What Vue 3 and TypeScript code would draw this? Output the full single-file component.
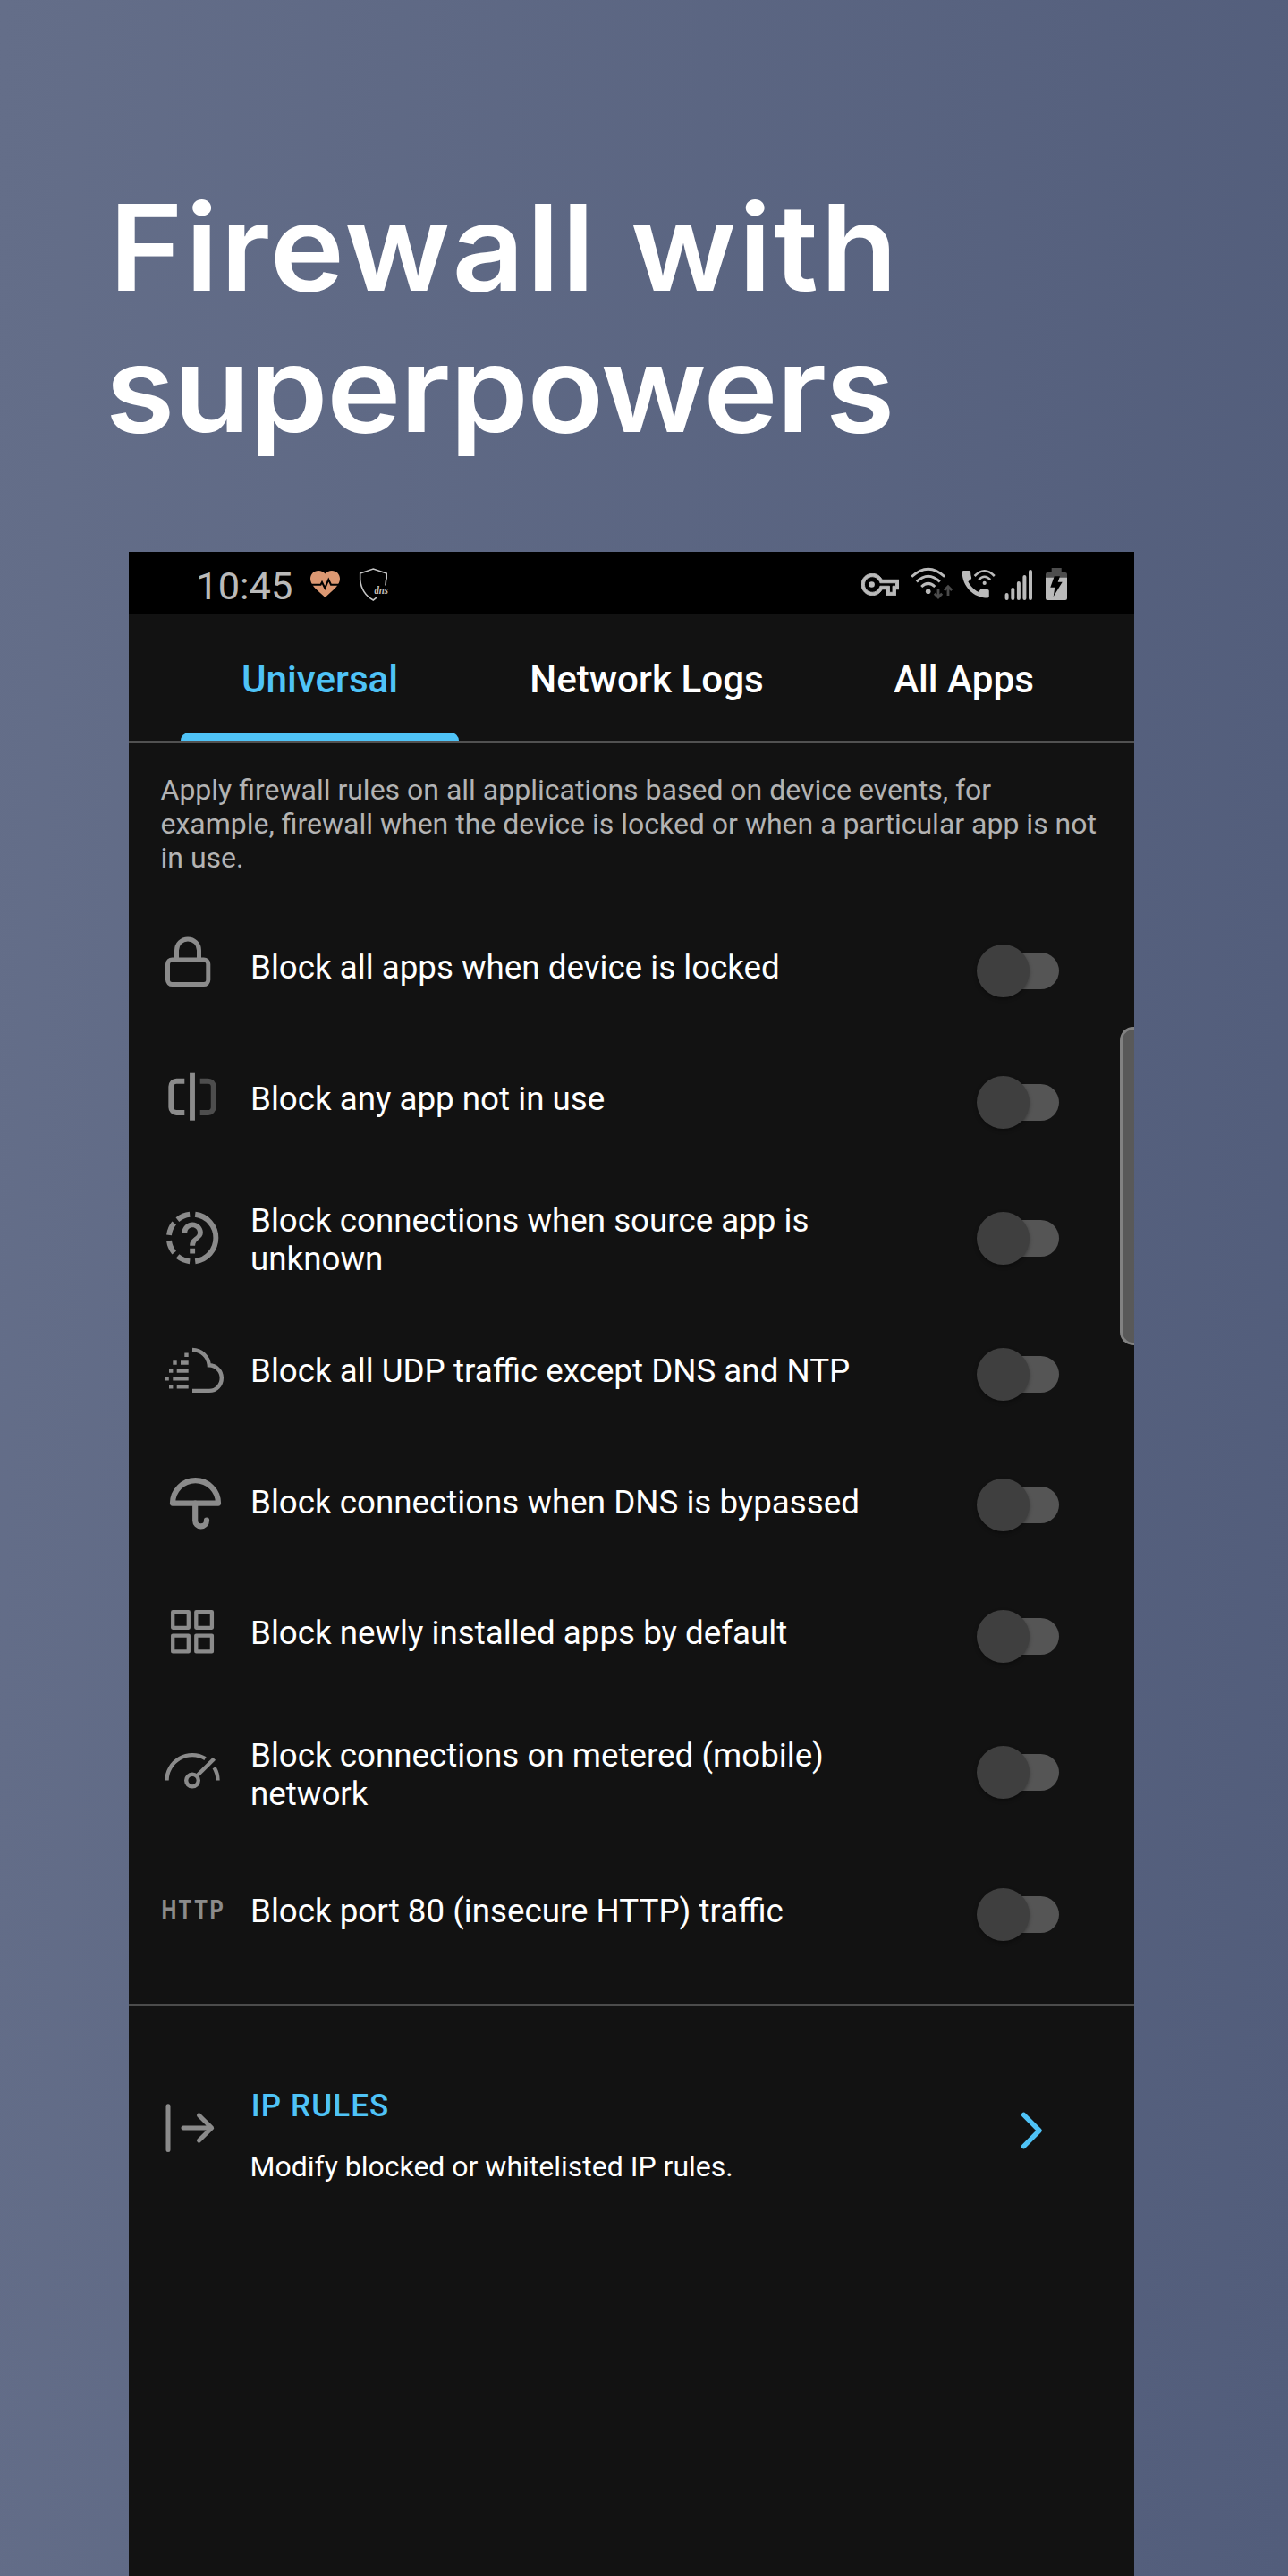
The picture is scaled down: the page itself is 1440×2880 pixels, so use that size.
<script setup lang="ts">
interface Rule {
  icon: string
  label: string
  height: number
  tall?: boolean
}

const tabs = [
  { name: 'Universal', width: 311, active: true },
  { name: 'Network Logs', width: 420, active: false },
  { name: 'All Apps', width: 289, active: false },
]

const rules: Rule[] = [
  { icon: 'lock', label: 'Block all apps when device is locked', height: 146.7 },
  { icon: 'split', label: 'Block any app not in use', height: 146.7 },
  { icon: 'unknown', label: 'Block connections when source app is\nunknown', height: 157.3, tall: true },
  { icon: 'cloud', label: 'Block all UDP traffic except DNS and NTP', height: 146.7 },
  { icon: 'umbrella', label: 'Block connections when DNS is bypassed', height: 146.7 },
  { icon: 'grid', label: 'Block newly installed apps by default', height: 147 },
  { icon: 'gauge', label: 'Block connections on metered (mobile)\nnetwork', height: 157, tall: true },
  { icon: 'http', label: 'Block port 80 (insecure HTTP) traffic', height: 160 },
]
</script>

<template>
  <main class="page">
    <h1 class="headline">
      <span class="line first">Firewall with</span>
      <span class="line second">superpowers</span>
    </h1>

    <section class="phone">
      <header class="status">
        <span class="time">10:45</span>
        <svg class="heart" width="33" height="30" viewBox="0 0 33 30">
          <path transform="translate(-3.3 -4.9) scale(1.65 1.635)" fill="#dc9872" d="M12 21.35l-1.45-1.32C5.4 15.36 2 12.28 2 8.5 2 5.42 4.42 3 7.5 3c1.74 0 3.41.81 4.5 2.09C13.09 3.81 14.76 3 16.5 3 19.58 3 22 5.42 22 8.5c0 3.78-3.4 6.86-8.55 11.54L12 21.35z" />
          <path fill="none" stroke="#000" stroke-width="2" d="M1 15.7H11.5L13 13L16.3 19.5L20.3 10L23 15.7H32" />
        </svg>
        <svg class="shield" width="40" height="39" viewBox="0 0 40 39">
          <path fill="none" stroke="#c4c4c4" stroke-width="1.6" d="M30 20.5L30.5 15L31.2 12.5V7L16.3 2L1.7 7V14C2.6 24.5 8 32.5 16.3 37L20.6 33.7" />
          <text x="17.5" y="30" font-size="13" font-style="italic" font-weight="700" textLength="15.5" lengthAdjust="spacingAndGlyphs" fill="#c4c4c4" font-family="'Liberation Serif', serif">dns</text>
        </svg>
        <span class="spacer"></span>
        <svg class="key" width="42" height="25" viewBox="0 5 24 14">
          <path fill="#bababa" stroke="#bababa" stroke-width=".5" d="M22 19h-6v-4h-2.68c-1.14 2.42-3.6 4-6.32 4-3.86 0-7-3.14-7-7s3.14-7 7-7c2.72 0 5.17 1.58 6.32 4H24v6h-2v4zm-4-2h2v-4h2v-2H11.94l-.23-.67C11.01 8.34 9.11 7 7 7c-2.76 0-5 2.24-5 5s2.24 5 5 5c2.11 0 4.01-1.34 4.71-3.33l.23-.67H18v4z" />
          <circle cx="6.6" cy="12" r="1.9" fill="#bababa" />
        </svg>
        <svg class="wifi" width="48" height="37" viewBox="0 0 48 37">
          <g fill="none" stroke="#bababa" stroke-width="2.9">
            <path d="M1.2 10.8Q19.7-6.5 38.2 10.8" />
            <path d="M6.8 16.4Q19.7 4 32.8 16.4" />
            <path d="M12.2 22Q19.7 14.8 27.3 22" />
          </g>
          <circle cx="19.7" cy="27.2" r="2.8" fill="#bababa" />
          <path fill="none" stroke="#4a4a4a" stroke-width="2.8" d="M31 24V34M26.8 29.8L31 34L35.2 29.8M42 32V22M37.8 26L42 21.8L46.2 26" />
        </svg>
        <svg class="call" width="38" height="34" viewBox="0 0 38 34">
          <path transform="translate(-4.3 -3.1) scale(1.67 1.7)" fill="#bababa" d="M20.01 15.38c-1.23 0-2.42-.2-3.53-.56-.35-.12-.74-.03-1.01.24l-1.57 1.97c-2.83-1.35-5.48-3.9-6.89-6.83l1.95-1.66c.27-.28.35-.67.24-1.02-.37-1.11-.56-2.3-.56-3.53 0-.54-.45-.99-.99-.99H4.19C3.65 3 3 3.24 3 3.99 3 13.28 10.73 21 20.01 21c.71 0 .99-.63.99-1.18v-3.45c0-.54-.45-.99-.99-.99z" />
          <path fill="none" stroke="#000" stroke-width="2" d="M13 0V9L20 13" />
          <g fill="none" stroke="#bababa" stroke-width="2.6">
            <path d="M14.6 8Q25.7-3.6 36.8 8" />
            <path d="M19.2 12.2Q25.7 5.4 32.2 12.2" />
          </g>
          <circle cx="25.7" cy="15.9" r="2.1" fill="#bababa" />
        </svg>
        <svg class="signal" width="32" height="37" viewBox="0 0 32 37">
          <path fill="none" stroke="#bababa" stroke-width="4" stroke-linecap="round" d="M2.6 29V33M9.3 23V33M15.9 16V33M22.4 9V33M29 3V33" />
        </svg>
        <svg class="battery" width="24" height="36" viewBox="0 0 24 36">
          <path fill="#4d4d4d" d="M6.7 0h11v5H22a2 2 0 0 1 2 2v4H0V7a2 2 0 0 1 2-2h4.7z" />
          <path fill="#bababa" d="M0 10.7h24V34a2 2 0 0 1-2 2H2a2 2 0 0 1-2-2z" />
          <path fill="#000" d="M9.7 9.3H16L13.7 15.7H18.7L8.7 32L10.3 21.7H5.3z" />
        </svg>
      </header>

      <nav class="tabs">
        <div v-for="tab in tabs" :key="tab.name" class="tab" :class="{ active: tab.active }" :style="{ width: tab.width + 'px' }">
          <span class="tab-name">{{ tab.name }}</span>
          <span v-if="tab.active" class="indicator"></span>
        </div>
      </nav>

      <p class="intro">Apply firewall rules on all applications based on device events, for<br />example, firewall when the device is locked or when a particular app is not<br />in use.</p>

      <div class="rules">
        <div v-for="rule in rules" :key="rule.icon" class="rule" :style="{ height: rule.height + 'px' }">
          <svg class="icon" width="80" height="80" viewBox="0 0 80 80" fill="none" stroke="#8b8b8b">
            <g v-if="rule.icon === 'lock'" stroke-width="5">
              <rect x="11.5" y="26.9" width="45.3" height="27.7" rx="5" />
              <path d="M21.5 27V16.4a12.5 12.5 0 0 1 25 0V27" />
            </g>
            <g v-else-if="rule.icon === 'split'" stroke-width="5.9">
              <path d="M30.3 16.7H21.3a6 6 0 0 0-6 6V46a6 6 0 0 0 6 6H30.3" />
              <path d="M39 7.7V60.7" />
              <path stroke="#4d4d4d" d="M47.7 16.7H56.7a6 6 0 0 1 6 6V46a6 6 0 0 1-6 6H47.7" />
            </g>
            <g v-else-if="rule.icon === 'unknown'" stroke-width="5.9">
              <path d="M42.2 13.8A26.4 26.4 0 0 1 42.2 66.2" />
              <path d="M36.2 13.8A26.4 26.4 0 0 0 22.4 19.6" />
              <path d="M18.7 23.4A26.4 26.4 0 0 0 13 36.8" />
              <path d="M13 43.2A26.4 26.4 0 0 0 18.7 56.6" />
              <path d="M22.6 60.5A26.4 26.4 0 0 0 36.2 66.2" />
              <path transform="translate(4 4.8) scale(2.93)" fill="#8b8b8b" stroke="none" d="M12 6c-2.21 0-4 1.79-4 4h2c0-1.1.9-2 2-2s2 .9 2 2c0 2-3 1.75-3 5h2c0-2.25 3-2.5 3-5 0-2.21-1.79-4-4-4zM11 16h2v2h-2z" />
            </g>
            <g v-else-if="rule.icon === 'cloud'" stroke-width="4.4">
              <path d="M39 13C49 13.3 57 20.5 57.8 30.3C65.5 30.5 71.8 36.8 71.8 44.5C71.8 52.5 65.8 58.9 58 58.9H39" />
              <path d="M30.3 18.8H34.7M17.3 27.5H21.7M26 27.5H34.7M13 36.5H17.4M21.7 36.5H34.7M8.4 45.2H12.8M17.3 45.2H34.7M13 54.2H17.4M21.7 54.2H34.7" />
            </g>
            <g v-else-if="rule.icon === 'umbrella'" stroke-width="6.2" stroke-linejoin="round" stroke-linecap="round">
              <path d="M17 37.6A25.5 25.5 0 0 1 68 37.6Z" />
              <path d="M42.2 37.6V57a6.4 6.4 0 0 0 12.8 0v-.5" />
            </g>
            <g v-else-if="rule.icon === 'grid'" stroke-width="4.3" stroke-linejoin="round">
              <rect x="17.2" y="12.2" width="17.6" height="17.6" />
              <rect x="43.3" y="12.2" width="17.6" height="17.6" />
              <rect x="17.2" y="38.6" width="17.6" height="17.8" />
              <rect x="43.3" y="38.6" width="17.6" height="17.8" />
            </g>
            <g v-else-if="rule.icon === 'gauge'" stroke-width="4.4">
              <circle cx="39" cy="48.6" r="6.8" />
              <path d="M10.5 48.6A28.5 28.5 0 0 1 53.5 24.1" />
              <path d="M63.5 34.1A28.5 28.5 0 0 1 67.5 48.6" />
              <path d="M43.8 43.8L63.5 24.3" />
            </g>
            <text v-else class="http" transform="translate(4.500 46) scale(.78 1)" textLength="89" lengthAdjust="spacing">HTTP</text>
          </svg>
          <span class="label" :class="{ tall: rule.tall }">{{ rule.label }}</span>
          <span class="toggle"><span class="track"></span><span class="thumb"></span></span>
        </div>
      </div>

      <hr class="divider" />

      <div class="ip">
        <svg class="ip-icon" width="80" height="80" viewBox="0 0 80 80" fill="none" stroke="#8b8b8b" stroke-width="5" stroke-linecap="round" stroke-linejoin="round">
          <path d="M12 15.8V64.5M29 40H60.5M46.5 26L60.7 40L46.5 54" />
        </svg>
        <div class="ip-text">
          <div class="ip-title">IP RULES</div>
          <div class="ip-sub">Modify blocked or whitelisted IP rules.</div>
        </div>
        <svg class="chevron" width="26" height="44" viewBox="0 0 26 44" fill="none" stroke="#4fc3f7" stroke-width="5.4" stroke-linecap="round" stroke-linejoin="round">
          <path d="M4.5 4.3L22 22L4.5 39.7" />
        </svg>
      </div>

      <span class="edge-handle"></span>
    </section>
  </main>
</template>

<style>
body {
  margin: 0;
}
</style>

<style scoped>
.page {
  width: 1440px;
  height: 2880px;
  overflow: hidden;
  display: flex;
  flex-direction: column;
  background: linear-gradient(93deg, #646e89 0%, #525d7b 100%);
  font-family: Roboto, "Noto Sans", sans-serif;
}
.headline {
  margin: 0;
  height: 617px;
  padding-top: 197px;
  box-sizing: border-box;
  flex: none;
  color: #fff;
  font: 600 134px/158px Inter, sans-serif;
}
.line {
  display: block;
  width: max-content;
  white-space: nowrap;
  transform: scaleX(1.05);
  transform-origin: 0 50%;
}
.first {
  margin-left: 122px;
  letter-spacing: 2.33px;
}
.second {
  margin-left: 117.5px;
  letter-spacing: -1.25px;
}
.phone {
  position: relative;
  width: 1124px;
  margin-left: 144px;
  flex: 1;
  background: #121212;
}
.status {
  height: 70px;
  padding: 0 75px 0 75.3px;
  display: flex;
  align-items: flex-start;
  background: #000;
}
.status svg {
  flex: none;
}
.time {
  width: 108px;
  margin-top: 13px;
  font-size: 43.4px;
  line-height: 51px;
  color: #bababa;
}
.heart { margin: 21px 0 0 19.7px; }
.shield { margin: 17px 0 0 21px; }
.spacer { flex: 1; }
.key { margin: 24px 13px 0 0; }
.wifi { margin: 17px 9px 0 0; }
.call { margin: 19px 10px 0 0; }
.signal { margin: 19px 14px 0 0; }
.battery { margin: 18px 0 0; }
.tabs {
  display: flex;
  height: 141px;
  padding-left: 58px;
  border-bottom: 3px solid #515151;
}
.tab {
  display: flex;
  flex-direction: column;
  align-items: center;
  color: #fff;
}
.tab-name {
  margin-top: 48px;
  height: 84px;
  font-size: 42.2px;
  font-weight: 500;
  line-height: 49px;
  white-space: nowrap;
}
.active {
  color: #4fc3f7;
}
.indicator {
  width: 100%;
  height: 9px;
  border-radius: 9px 9px 0 0;
  background: #4fc3f7;
}
.intro {
  margin: 0;
  padding: 34.4px 0 34px 35.5px;
  font-size: 32px;
  line-height: 37.6px;
  color: #b3b3b3;
  white-space: nowrap;
}
.rule {
  display: flex;
  align-items: center;
  padding: 0 84px 0 32px;
}
.icon {
  flex: none;
  margin-right: 24px;
}
.http {
  fill: #8b8b8b;
  stroke: none;
  font: 700 30.5px Roboto, sans-serif;
}
.label {
  flex: 1;
  padding-bottom: 7.6px;
  font-size: 36.74px;
  line-height: 43px;
  color: #fff;
  white-space: pre;
}
.label.tall {
  padding: 4.2px 0 0;
}
.toggle {
  display: grid;
  align-items: center;
  width: 92px;
  height: 59px;
}
.track,
.thumb {
  grid-area: 1 / 1;
}
.track {
  height: 41px;
  margin-left: 8px;
  border-radius: 21px;
  background: #555;
}
.thumb {
  width: 59px;
  height: 59px;
  border-radius: 50%;
  background: #3f3f3f;
  box-shadow: 0 2px 4px rgba(0, 0, 0, 0.35);
}
.divider {
  height: 3px;
  margin: 19.5px 0 0;
  border: 0;
  background: #4c4c4c;
}
.ip {
  display: flex;
  align-items: center;
  padding: 91.7px 102.5px 0 32px;
}
.ip-icon {
  margin: 0 24px 18px 0;
}
.ip-text {
  flex: 1;
}
.ip-title {
  padding-left: 0.8px;
  font-size: 35px;
  font-weight: 500;
  line-height: 41px;
  letter-spacing: 1.1px;
  color: #4fc3f7;
}
.ip-sub {
  margin: 29px 0 0 -0.5px;
  font-size: 32px;
  line-height: 37.5px;
  color: #fff;
}
.chevron {
  margin-bottom: 13px;
}
.edge-handle {
  position: absolute;
  right: 0;
  top: 531px;
  width: 16px;
  height: 356px;
  box-sizing: border-box;
  border: 3px solid #828282;
  border-right: 0;
  border-radius: 15px 0 0 15px;
  background: #595959;
}
</style>
